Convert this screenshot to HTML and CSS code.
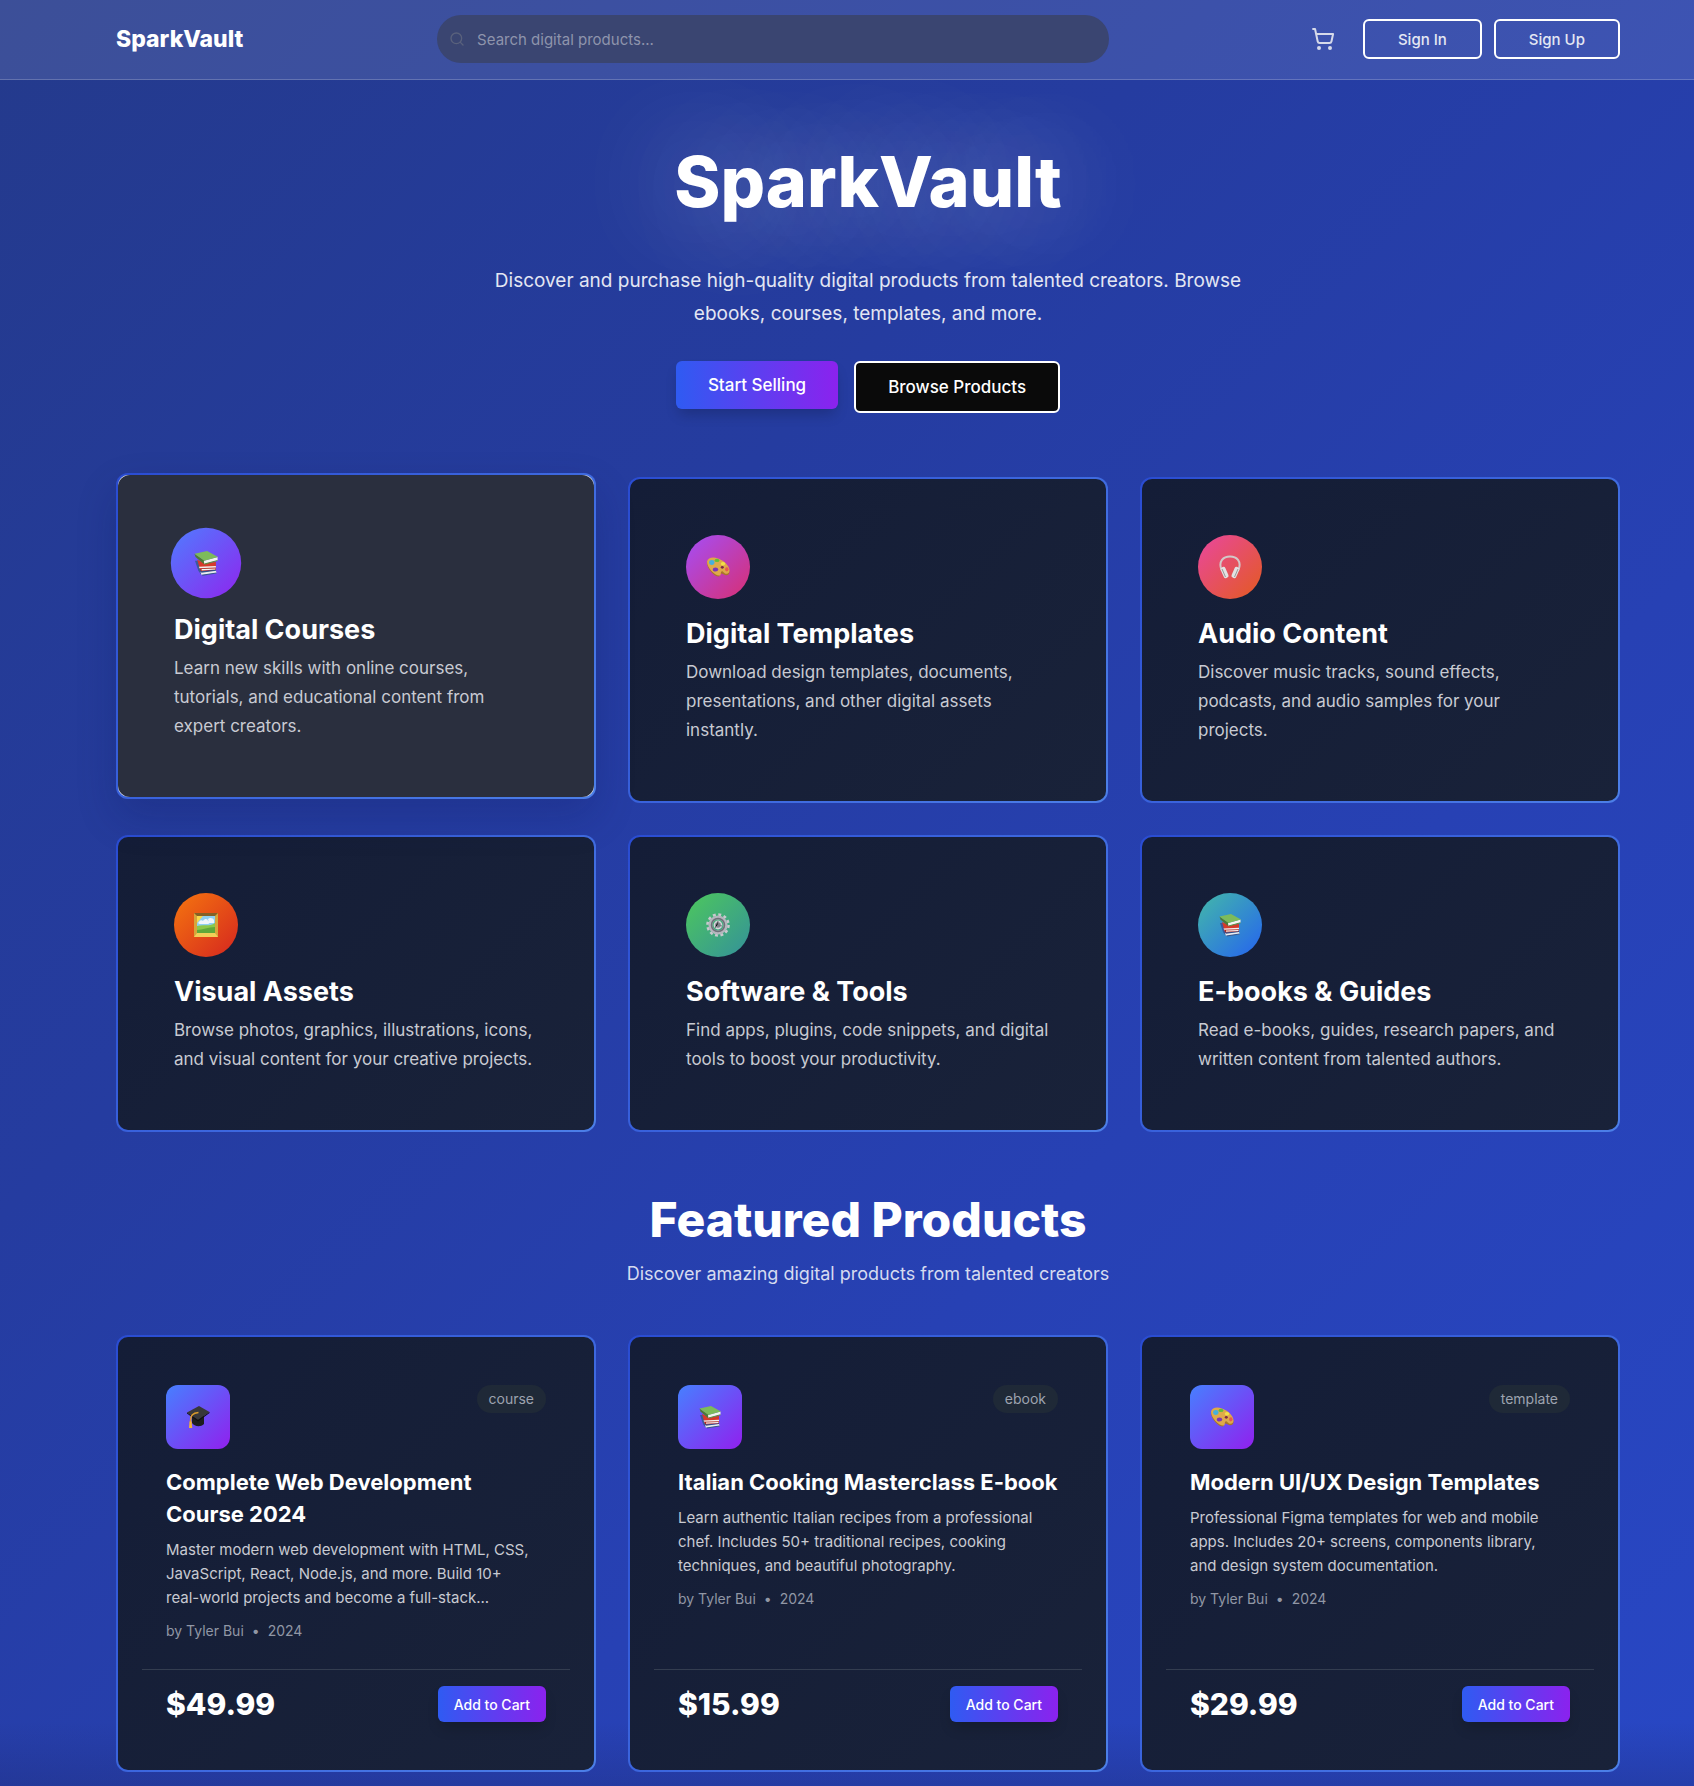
FILE: index.html
```html
<!DOCTYPE html>
<html lang="en">
<head>
<meta charset="utf-8">
<meta name="viewport" content="width=device-width, initial-scale=1">
<title>SparkVault</title>
<link rel="stylesheet" href="styles.css">
</head>
<body>
<svg class="sprite" aria-hidden="true">
  <defs>
    <symbol id="books" viewBox="0 0 24 24">
      <path d="M2 10l3 9 2.500 3.500 1-3L5 10z" fill="#3b5a9c"/>
      <path d="M7 20l14-1.200.5 2.200L8 23z" fill="#e9ecef"/>
      <path d="M6.500 19.500L21 18v1L8 20.800z" fill="#2f4f8f"/>
      <path d="M8 22.600l13.500-2v1L9 23.600z" fill="#36578f"/>
      <path d="M4 9l2.500 8.500L21 17v-6l-10 1z" fill="#d63a2b"/>
      <path d="M5.500 15.500l15.500-.8v2.600l-14 1z" fill="#f1eeee"/>
      <path d="M6 16.700l15-.5v2L7.500 19.500z" fill="#b3281e"/>
      <path d="M8 17.500l12.500-.6v1L8 18.800z" fill="#f4f4f4"/>
      <path d="M1.500 3.500l1 3L10 13l1-3z" fill="#4d7a38"/>
      <path d="M10 10l12.500-3.500v3.300L10.500 13z" fill="#f3f3f3"/>
      <path d="M1.500 3.500L13 1l10 5.500L10.500 10z" fill="#7dbb5b"/>
      <path d="M10.500 12.400l12-3.200v1L10.500 13.600z" fill="#5a8f42"/>
    </symbol>
    <symbol id="palette" viewBox="0 0 24 24">
      <path d="M1 7.500C2 3.500 7 2.500 12 4.500c6 2 11 7 11.500 12 .3 3-2 4.500-4.500 3.500-2-.8-3-2-4.500-1.500-1.300.5 0 2.300-1.500 3-3 1-12-6.500-12-14z" fill="#a87629"/>
      <path d="M1 6.500C2 2.500 7 1.500 12 3.500c6 2 11 7 11.500 11.500.3 3-2 4.500-4.500 3.500-1.500-.6-1.600-2.300-3-2.200-2 .2-.3 3.500-2 4.200-4 1.200-13-7-13-14z" fill="#dfa94a"/>
      <ellipse cx="5.800" cy="7.500" rx="2.700" ry="2.400" fill="#45b0dc"/>
      <ellipse cx="11" cy="5.400" rx="2.400" ry="1.700" fill="#5fbf3a"/>
      <ellipse cx="17" cy="8.700" rx="2.200" ry="1.700" fill="#f2e048"/>
      <ellipse cx="20.800" cy="14.300" rx="1.700" ry="2.100" fill="#e85a4f"/>
      <ellipse cx="9.500" cy="14.500" rx="2.700" ry="2.100" fill="#7b35b5"/>
      <ellipse cx="16.300" cy="12.300" rx="1.500" ry="1.400" fill="#7a2747"/>
    </symbol>
    <symbol id="headphones" viewBox="0 0 24 24">
      <path d="M3.500 15C0 6 5.500 1.500 12 1.500S24 6 20.500 15" fill="none" stroke="#d3c8c8" stroke-width="2"/>
      <rect x="3.800" y="12" width="5" height="11.500" rx="2" fill="#e2e2e2" transform="rotate(-24 6 17)"/>
      <rect x="15.200" y="12" width="5" height="11.500" rx="2" fill="#e2e2e2" transform="rotate(24 18 17)"/>
      <path d="M4 14l3.500 8M20 14l-3.500 8" stroke="#999" stroke-width="1"/>
    </symbol>
    <symbol id="frame" viewBox="0 0 24 24">
      <path d="M0 0h24v24H0z" fill="#d6a63a"/>
      <path d="M0 0h24l-3 3H3z" fill="#846126"/>
      <path d="M0 24l3-4h18l3 4z" fill="#f2cf58"/>
      <path d="M3 3h18v17H3z" fill="#8fd0f2"/>
      <path d="M3 3h6L3 10z" fill="#f9d84a"/>
      <path d="M5 9c1-2 3-2 4-1 2-3 5-2 5 0 2 0 2 3 0 3H6c-2 0-2-2-1-2zM14 6c2-2 5-1 6 1v3h-5z" fill="#f0f5fa"/>
      <path d="M3 13c6-2 12 1 18-3v10H3z" fill="#8bc84a"/>
      <path d="M3 17c6 0 11-3 18-3v6H3z" fill="#5fa83a"/>
    </symbol>
    <symbol id="gear" viewBox="0 0 24 24">
      <circle cx="12" cy="12" r="10.500" fill="none" stroke="#c9c9cf" stroke-width="2.600" stroke-dasharray="2.900 2.597"/>
      <circle cx="12" cy="12" r="7.600" fill="none" stroke="#b4b6bd" stroke-width="4"/>
      <circle cx="12" cy="12" r="6.500" fill="none" stroke="#6d7078" stroke-width="1.500"/>
      <circle cx="12" cy="12" r="3.600" fill="#7f828a" stroke="#d5d5da" stroke-width="1.600"/>
      <path d="M12 8v4l-3 3M12 12l4 1" stroke="#777a80" stroke-width="1"/>
    </symbol>
    <symbol id="cap" viewBox="0 0 24 24">
      <path d="M6 11v7c2 3 8 5 12 1v-8z" fill="#1d1d1f"/>
      <path d="M1 7.500L13 1l10.500 6L12 15z" fill="#38383a"/>
      <path d="M1 7.500L12 15l11.500-8v1L12 16.500 1 8.500z" fill="#101012"/>
      <path d="M12.500 7.500C7 8 4.500 10 4.500 17" fill="none" stroke="#d99a2b" stroke-width="1.500"/>
      <path d="M3.500 16.500h2.200l.5 6.500H3z" fill="#f0b23a"/>
    </symbol>
  </defs>
</svg>

<header class="header">
  <div class="container header-row">
    <a class="logo" href="#">SparkVault</a>
    <label class="search">
      <svg class="search-icon" viewBox="0 0 24 24" aria-hidden="true"><circle cx="11" cy="11" r="8"/><path d="m21 21-4.300-4.300"/></svg>
      <input class="search-input" type="search" placeholder="Search digital products..." aria-label="Search digital products">
    </label>
    <nav class="header-actions">
      <a class="cart" href="#" aria-label="Cart">
        <svg class="cart-icon" viewBox="0 0 24 24" aria-hidden="true"><circle cx="8" cy="21" r="1"/><circle cx="19" cy="21" r="1"/><path d="M2.050 2.050h2l2.660 12.420a2 2 0 0 0 2 1.580h9.780a2 2 0 0 0 1.950-1.570l1.650-7.430H5.120"/></svg>
      </a>
      <div class="auth">
        <button class="auth-button" type="button">Sign In</button>
        <button class="auth-button" type="button">Sign Up</button>
      </div>
    </nav>
  </div>
</header>

<main class="container">
  <section class="hero">
    <h1 class="hero-title">SparkVault</h1>
    <p class="hero-text">Discover and purchase high-quality digital products from talented creators. Browse ebooks, courses, templates, and more.</p>
    <div class="hero-actions">
      <button class="button button-primary" type="button">Start Selling</button>
      <button class="button button-dark" type="button">Browse Products</button>
    </div>
  </section>

  <section class="grid" aria-label="Categories">
    <article class="card category is-active">
      <div class="category-body">
        <div class="category-icon blue"><svg class="emoji" aria-hidden="true"><use href="#books"/></svg></div>
        <h3 class="category-title">Digital Courses</h3>
        <p class="category-text">Learn new skills with online courses, tutorials, and educational content from expert creators.</p>
      </div>
    </article>
    <article class="card category">
      <div class="category-body">
        <div class="category-icon purple"><svg class="emoji" aria-hidden="true"><use href="#palette"/></svg></div>
        <h3 class="category-title">Digital Templates</h3>
        <p class="category-text">Download design templates, documents, presentations, and other digital assets instantly.</p>
      </div>
    </article>
    <article class="card category">
      <div class="category-body">
        <div class="category-icon pink"><svg class="emoji" aria-hidden="true"><use href="#headphones"/></svg></div>
        <h3 class="category-title">Audio Content</h3>
        <p class="category-text">Discover music tracks, sound effects, podcasts, and audio samples for your projects.</p>
      </div>
    </article>
    <article class="card category">
      <div class="category-body">
        <div class="category-icon orange"><svg class="emoji" aria-hidden="true"><use href="#frame"/></svg></div>
        <h3 class="category-title">Visual Assets</h3>
        <p class="category-text">Browse photos, graphics, illustrations, icons, and visual content for your creative projects.</p>
      </div>
    </article>
    <article class="card category">
      <div class="category-body">
        <div class="category-icon green"><svg class="emoji" aria-hidden="true"><use href="#gear"/></svg></div>
        <h3 class="category-title">Software &amp; Tools</h3>
        <p class="category-text">Find apps, plugins, code snippets, and digital tools to boost your productivity.</p>
      </div>
    </article>
    <article class="card category">
      <div class="category-body">
        <div class="category-icon teal"><svg class="emoji" aria-hidden="true"><use href="#books"/></svg></div>
        <h3 class="category-title">E-books &amp; Guides</h3>
        <p class="category-text">Read e-books, guides, research papers, and written content from talented authors.</p>
      </div>
    </article>
  </section>

  <section class="featured">
    <h2 class="featured-title">Featured Products</h2>
    <p class="featured-text">Discover amazing digital products from talented creators</p>
    <div class="grid">
      <article class="card product">
        <div class="product-body">
          <div class="product-top">
            <div class="product-icon"><svg class="emoji" aria-hidden="true"><use href="#cap"/></svg></div>
            <span class="badge">course</span>
          </div>
          <h3 class="product-title">Complete Web Development Course 2024</h3>
          <p class="product-text">Master modern web development with HTML, CSS, JavaScript, React, Node.js, and more. Build 10+ <span class="nowrap">real-world</span> projects and become a full-stack...</p>
          <p class="product-meta"><span>by Tyler Bui</span><span>•</span><span>2024</span></p>
        </div>
        <div class="product-foot">
          <span class="price">$49.99</span>
          <button class="button-primary add" type="button">Add to Cart</button>
        </div>
      </article>
      <article class="card product">
        <div class="product-body">
          <div class="product-top">
            <div class="product-icon"><svg class="emoji" aria-hidden="true"><use href="#books"/></svg></div>
            <span class="badge">ebook</span>
          </div>
          <h3 class="product-title">Italian Cooking Masterclass E-book</h3>
          <p class="product-text">Learn authentic Italian recipes from a professional chef. Includes 50+ traditional recipes, cooking techniques, and beautiful photography.</p>
          <p class="product-meta"><span>by Tyler Bui</span><span>•</span><span>2024</span></p>
        </div>
        <div class="product-foot">
          <span class="price">$15.99</span>
          <button class="button-primary add" type="button">Add to Cart</button>
        </div>
      </article>
      <article class="card product">
        <div class="product-body">
          <div class="product-top">
            <div class="product-icon"><svg class="emoji" aria-hidden="true"><use href="#palette"/></svg></div>
            <span class="badge">template</span>
          </div>
          <h3 class="product-title">Modern UI/UX Design Templates</h3>
          <p class="product-text">Professional Figma templates for web and mobile apps. Includes 20+ screens, components library, and design system documentation.</p>
          <p class="product-meta"><span>by Tyler Bui</span><span>•</span><span>2024</span></p>
        </div>
        <div class="product-foot">
          <span class="price">$29.99</span>
          <button class="button-primary add" type="button">Add to Cart</button>
        </div>
      </article>
    </div>
  </section>
</main>
</body>
</html>
```
FILE: styles.css
```css
*, *::before, *::after { box-sizing: border-box; }

body {
  margin: 0;
  min-height: 100vh;
  font-family: Inter, "Liberation Sans", sans-serif;
  color: #fff;
  background:
    linear-gradient(to top, rgba(30, 40, 110, .3), transparent 64px),
    linear-gradient(135deg, #243a8c 0%, #253ca0 35%, #2741b4 65%, #2847c4 100%);
}

h1, h2, h3, p { margin: 0; }
button, input { font: inherit; color: inherit; }
button { cursor: pointer; }
.sprite { position: absolute; width: 0; height: 0; }
.nowrap { white-space: nowrap; }

.container {
  max-width: 1694px;
  margin: 0 auto;
  padding: 0 74px 0 116px;
}

/* Header */
.header {
  background: rgba(255, 255, 255, .11);
  border-bottom: 1px solid rgba(255, 255, 255, .2);
}
.header-row {
  display: flex;
  align-items: center;
  justify-content: space-between;
  padding-top: 15px;
  padding-bottom: 16px;
}
.logo {
  font-size: 23px;
  line-height: 32px;
  font-weight: 800;
  color: #fff;
  text-decoration: none;
}
.search {
  flex: 0 1 672px;
  display: flex;
  align-items: center;
  gap: 12px;
  height: 48px;
  padding: 0 24px 0 12px;
  border-radius: 24px;
  background: #3a4571;
}
.search-icon {
  width: 16px;
  height: 16px;
  fill: none;
  stroke: #59617c;
  stroke-width: 2;
  stroke-linecap: round;
}
.search-input {
  flex: 1;
  min-width: 0;
  padding: 0;
  border: 0;
  outline: 0;
  background: none;
  font-size: 15px;
}
.search-input::placeholder { color: #8e94ac; opacity: 1; }
.header-actions { display: flex; align-items: center; gap: 20px; }
.cart { display: flex; padding: 8px; color: #d6daea; }
.cart-icon {
  width: 24px;
  height: 24px;
  fill: none;
  stroke: currentColor;
  stroke-width: 2;
  stroke-linecap: round;
  stroke-linejoin: round;
}
.auth { display: flex; gap: 12px; }
.auth-button {
  height: 40px;
  padding: 0 33px;
  border: 2px solid #fff;
  border-radius: 6px;
  background: none;
  color: #e4e7f3;
  font-size: 15px;
  font-weight: 500;
}

/* Hero */
.hero {
  display: flex;
  flex-direction: column;
  align-items: center;
  padding: 64px 0;
  text-align: center;
}
.hero-title {
  font-size: 70px;
  line-height: 76px;
  font-weight: 800;
  text-shadow: 0 0 100px rgba(255, 255, 255, .5);
}
.hero-text {
  max-width: 768px;
  margin: 44px 0 31px;
  font-size: 19px;
  line-height: 33px;
  color: #e3e6f3;
}
.hero-actions { display: flex; align-items: flex-start; gap: 16px; }
.button {
  padding: 12px 32px;
  border: 0;
  border-radius: 6px;
  font-size: 17px;
  line-height: 24px;
  font-weight: 500;
}
.button-primary {
  background: linear-gradient(90deg, #2f5bf2, #8b22ee);
  box-shadow: 0 8px 14px -3px rgba(0, 0, 0, .2);
}
.button-dark { border: 2px solid #fff; background: #0a0a0a; }

/* Cards */
.grid {
  display: grid;
  grid-template-columns: repeat(3, minmax(0, 1fr));
  gap: 32px;
}
.card {
  border: 2px solid transparent;
  border-radius: 12px;
  background:
    linear-gradient(135deg, #141d37, #192239) padding-box,
    linear-gradient(135deg, #2a4cd2, #3f6be0 60%, #4c7fe8) border-box;
}
.category-body { height: 100%; padding: 56px; border-radius: 12px; }
.is-active {
  transform: translateY(-4px);
  background:
    linear-gradient(#dfe3ec, #dfe3ec) padding-box,
    linear-gradient(135deg, #2a4cd2, #3f6be0 60%, #4c7fe8) border-box;
  box-shadow: 0 18px 40px rgba(10, 20, 80, .2);
}
.is-active .category-body { background: #2a2f3e; }
.is-active .category-icon { transform: scale(1.1); }
.category-icon, .product-icon {
  display: flex;
  align-items: center;
  justify-content: center;
  width: 64px;
  height: 64px;
}
.category-icon { border-radius: 50%; }
.blue { background: linear-gradient(135deg, #4f7dff, #8f25ee); }
.purple { background: linear-gradient(135deg, #a44ef8, #d82f72); }
.pink { background: linear-gradient(135deg, #e9479f, #e35a20); }
.orange { background: linear-gradient(135deg, #f5760f, #d5261f); }
.green { background: linear-gradient(135deg, #4dc85c, #34919a); }
.teal { background: linear-gradient(135deg, #43b9a8, #2563f0); }
.emoji { width: 24px; height: 24px; }
.category-title {
  margin: 17px 0 6px;
  font-size: 27px;
  line-height: 36px;
  font-weight: 700;
}
.category-text {
  font-size: 17px;
  line-height: 29px;
  color: #c8cad2;
}

/* Featured */
.featured { padding: 64px 0 14px; }
.featured-title {
  font-size: 48px;
  line-height: 48px;
  font-weight: 800;
  text-align: center;
}
.featured-text {
  margin: 16px 0 47px;
  font-size: 18px;
  line-height: 28px;
  color: #d6dbf0;
  text-align: center;
}
.product { display: flex; flex-direction: column; padding: 24px; }
.product-body { flex: 1; padding: 24px 24px 28px; }
.product-top {
  display: flex;
  align-items: flex-start;
  justify-content: space-between;
}
.product-icon {
  border-radius: 12px;
  background: linear-gradient(135deg, #4680ff, #9120ee);
}
.badge {
  padding: 4px 12px;
  border-radius: 14px;
  background: #1f2937;
  color: #9da3af;
  font-size: 14px;
  line-height: 20px;
}
.product-title {
  margin: 17px 0 8px;
  font-size: 22px;
  line-height: 32px;
  font-weight: 700;
}
.product-text {
  padding-right: 8px;
  font-size: 15px;
  line-height: 24px;
  color: #c8cad2;
}
.product-meta {
  display: flex;
  gap: 8px;
  margin-top: 11px;
  font-size: 14px;
  line-height: 20px;
  color: #9197a5;
}
.product-foot {
  display: flex;
  align-items: center;
  justify-content: space-between;
  padding: 16px 24px 24px;
  border-top: 1px solid #343d50;
}
.price { font-size: 30px; line-height: 36px; font-weight: 800; }
.add {
  height: 36px;
  padding: 0 16px;
  border: 0;
  border-radius: 6px;
  font-size: 14px;
  font-weight: 500;
}
```
